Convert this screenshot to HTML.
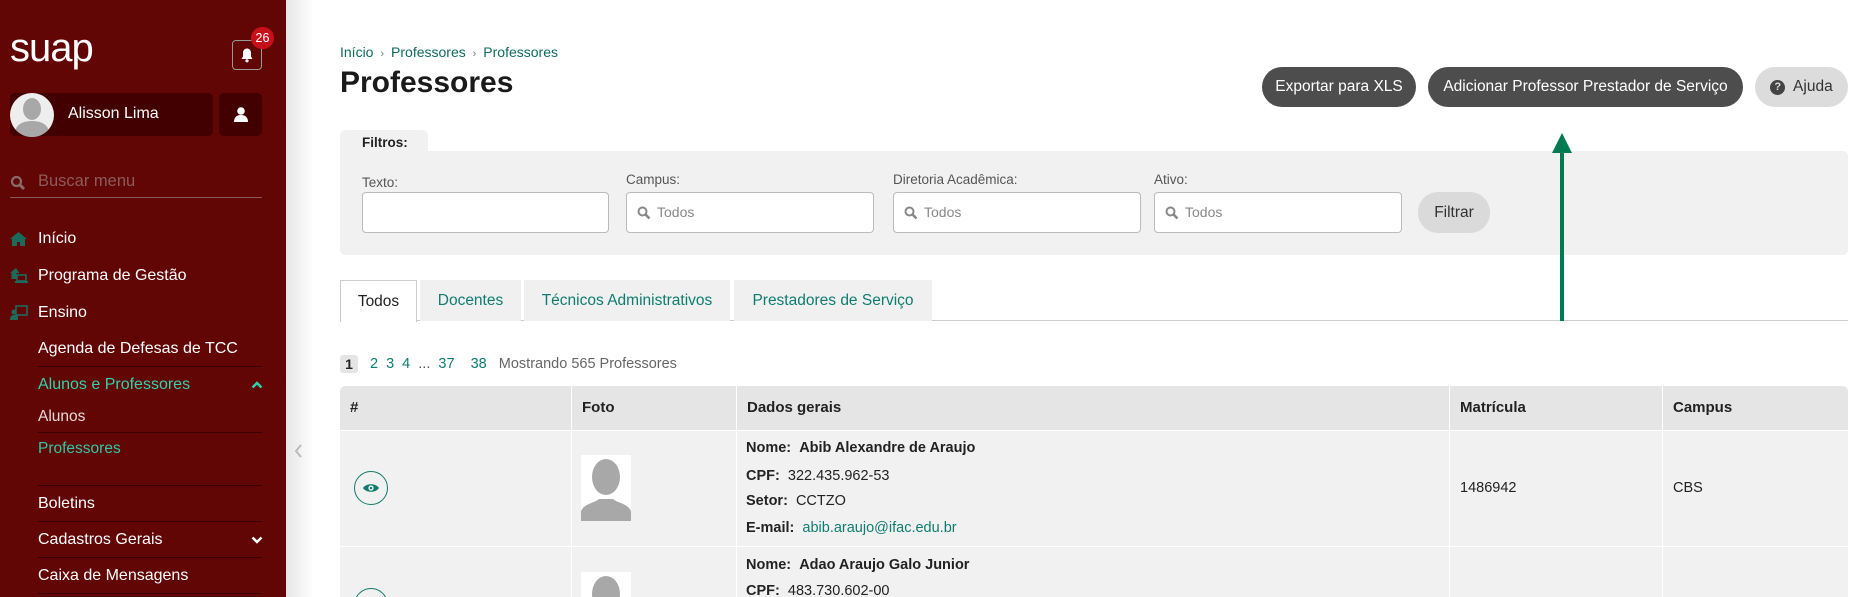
<!DOCTYPE html>
<html><head><meta charset="utf-8"><style>
*{margin:0;padding:0;box-sizing:border-box}
html,body{width:1859px;height:597px;overflow:hidden}
body{background:#fff;font-family:"Liberation Sans",sans-serif;color:#222}
#wrap{position:relative;width:1859px;height:597px;overflow:hidden}
.a{position:absolute}
#sb{left:0;top:0;width:286px;height:597px;background:#610505}
.mi{position:absolute;left:38px;color:#fff;font-size:16px;line-height:20px}
.ln{position:absolute;left:38px;width:224px;height:1px;background:#3a0000}
.teal{color:#0f7c70}
.lbl{position:absolute;font-size:13.5px;color:#555}
.inp{position:absolute;top:192px;height:41px;background:#fff;border:1px solid #bbb;border-radius:4px}
.inp span{position:absolute;left:30px;top:11px;font-size:14px;color:#888}
.btn{position:absolute;top:67px;height:40px;border-radius:20px;background:#4d4d4d;color:#fff;font-size:15.5px;line-height:40px;text-align:center}
.tab{position:absolute;top:280px;height:41px;background:#f0f0f0;font-size:15.5px;line-height:41px;text-align:center;color:#0f7c70}
.th{position:absolute;top:386px;height:44px;background:#e5e5e5;font-weight:bold;font-size:15px;line-height:44px;padding-left:10px}
.td{position:absolute;background:#f1f1f1;font-size:14.5px}
.dl{position:absolute;left:746px;font-size:14.5px;line-height:18px}
</style></head><body><div id="wrap">
<div id="sb" class="a">
  <div class="a" style="left:10px;top:26px;color:#fff;font-size:40px;letter-spacing:-1px">suap</div>
  <div class="a" style="left:232px;top:40px;width:30px;height:30px;border:1.5px solid #999;border-radius:4px"></div>
  <svg class="a" style="left:239px;top:47px" width="16" height="16" viewBox="0 0 16 16"><path d="M8 1.5c-2.5 0-4 2-4 4.5v3.5L2.5 12h11L12 9.5V6c0-2.5-1.5-4.5-4-4.5z" fill="#fff"/><circle cx="8" cy="13.8" r="1.6" fill="#fff"/></svg>
  <div class="a" style="left:251px;top:27px;width:23px;height:22px;border-radius:11px;background:#c8101a;color:#fff;font-size:12.5px;line-height:22px;text-align:center">26</div>
  <div class="a" style="left:10px;top:93px;width:203px;height:43px;background:#420000;border-radius:5px"></div>
  <div class="a" style="left:10px;top:93px;width:44px;height:44px;border-radius:50%;background:#eee;overflow:hidden"><svg width="44" height="44"><ellipse cx="22" cy="16" rx="9" ry="11" fill="#a8a8a8"/><path d="M4 44c0-12 8-16 18-16s18 4 18 16z" fill="#a8a8a8"/></svg></div>
  <div class="a" style="left:68px;top:105px;color:#fff;font-size:16px">Alisson Lima</div>
  <div class="a" style="left:219px;top:93px;width:43px;height:43px;background:#420000;border-radius:5px"></div>
  <svg class="a" style="left:233px;top:106px" width="16" height="16"><circle cx="8" cy="5" r="3.8" fill="#fff"/><path d="M1 16c0-5 3-7 7-7s7 2 7 7z" fill="#fff"/></svg>
  <svg class="a" style="left:10px;top:175px" width="16" height="16"><circle cx="6.5" cy="6.5" r="4.5" stroke="#8a6a6a" stroke-width="2.2" fill="none"/><path d="M10 10l4 4" stroke="#8a6a6a" stroke-width="3"/></svg>
  <div class="a" style="left:38px;top:172px;color:#8d5b5b;font-size:16.5px">Buscar menu</div>
  <div class="a" style="left:10px;top:197px;width:252px;height:1px;background:#8a5a5a"></div>
  <svg class="a" style="left:10px;top:232px" width="17" height="14"><path d="M8.5 0L0 7h2v7h5v-4h3v4h5V7h2z" fill="#1b6b5d"/></svg>
  <div class="mi" style="top:229px">Início</div>
  <svg class="a" style="left:10px;top:268px" width="18" height="16"><path d="M6 0L0 5h1.5v6h5V5h3z" fill="#1b6b5d"/><rect x="7" y="7" width="9" height="6" fill="none" stroke="#1b6b5d" stroke-width="1.6"/><rect x="5" y="13" width="13" height="2" fill="#1b6b5d"/></svg>
  <div class="mi" style="top:266px">Programa de Gestão</div>
  <svg class="a" style="left:10px;top:305px" width="18" height="16"><rect x="6" y="1" width="11" height="9" fill="none" stroke="#1b6b5d" stroke-width="1.6"/><circle cx="4" cy="7" r="2.5" fill="#1b6b5d"/><path d="M0 15c0-4 2-5 4-5h4v5z" fill="#1b6b5d"/></svg>
  <div class="mi" style="top:303px">Ensino</div>
  <div class="mi" style="top:339px">Agenda de Defesas de TCC</div>
  <div class="ln" style="top:366px"></div>
  <div class="mi" style="top:375px;color:#2fd3ad">Alunos e Professores</div>
  <svg class="a" style="left:251px;top:380px" width="12" height="9"><path d="M1.5 7.5L6 3l4.5 4.5" stroke="#2fd3ad" stroke-width="2.4" fill="none"/></svg>
  <div class="mi" style="top:407px;color:#e6d8d8;font-size:15.5px">Alunos</div>
  <div class="ln" style="top:432px"></div>
  <div class="mi" style="top:439px;color:#2fc8a5;font-size:15.5px">Professores</div>
  <div class="ln" style="top:485px"></div>
  <div class="mi" style="top:494px">Boletins</div>
  <div class="ln" style="top:521px"></div>
  <div class="mi" style="top:530px">Cadastros Gerais</div>
  <svg class="a" style="left:251px;top:536px" width="12" height="9"><path d="M1.5 1.5L6 6l4.5-4.5" stroke="#fff" stroke-width="2.4" fill="none"/></svg>
  <div class="ln" style="top:557px"></div>
  <div class="mi" style="top:566px">Caixa de Mensagens</div>
  <div class="ln" style="top:593px"></div>
</div>
<div class="a" style="left:286px;top:0;width:28px;height:597px;background:linear-gradient(to right,#e6e6e6,#fff)"></div>
<svg class="a" style="left:293px;top:443px" width="10" height="16"><path d="M8 2L3 8l5 6" stroke="#bbb" stroke-width="2" fill="none"/></svg>

<div class="a" style="left:340px;top:44px;font-size:14px;color:#0f6a60">Início <span style="color:#777;font-size:11px">&nbsp;›&nbsp;</span> Professores <span style="color:#777;font-size:11px">&nbsp;›&nbsp;</span> Professores</div>
<div class="a" style="left:340px;top:66px;font-size:30px;font-weight:bold;color:#1a1a1a">Professores</div>

<div class="btn" style="left:1262px;width:154px">Exportar para XLS</div>
<div class="btn" style="left:1428px;width:315px">Adicionar Professor Prestador de Serviço</div>
<div class="btn" style="left:1755px;width:93px;background:#dcdcdc;color:#333"><span style="display:inline-block;width:15px;height:15px;border-radius:50%;background:#444;color:#ddd;font-size:11px;line-height:15px;font-weight:bold;vertical-align:1px">?</span>&nbsp; Ajuda</div>

<div class="a" style="left:340px;top:130px;width:88px;height:24px;background:#f1f1f1;border-radius:6px 6px 0 0;font-size:13.5px;font-weight:bold;line-height:26px;padding-left:22px">Filtros:</div>
<div class="a" style="left:340px;top:151px;width:1508px;height:104px;background:#f1f1f1;border-radius:0 5px 5px 5px"></div>
<div class="lbl" style="left:362px;top:175px">Texto:</div>
<div class="lbl" style="left:626px;top:172px">Campus:</div>
<div class="lbl" style="left:893px;top:172px">Diretoria Acadêmica:</div>
<div class="lbl" style="left:1154px;top:172px">Ativo:</div>
<div class="inp" style="left:362px;width:247px"></div>
<div class="inp" style="left:626px;width:248px"><svg class="a" style="left:10px;top:13px" width="14" height="14"><circle cx="5.5" cy="5.5" r="4" stroke="#888" stroke-width="2" fill="none"/><path d="M8.5 8.5l4 4" stroke="#888" stroke-width="2.6"/></svg><span>Todos</span></div>
<div class="inp" style="left:893px;width:248px"><svg class="a" style="left:10px;top:13px" width="14" height="14"><circle cx="5.5" cy="5.5" r="4" stroke="#888" stroke-width="2" fill="none"/><path d="M8.5 8.5l4 4" stroke="#888" stroke-width="2.6"/></svg><span>Todos</span></div>
<div class="inp" style="left:1154px;width:248px"><svg class="a" style="left:10px;top:13px" width="14" height="14"><circle cx="5.5" cy="5.5" r="4" stroke="#888" stroke-width="2" fill="none"/><path d="M8.5 8.5l4 4" stroke="#888" stroke-width="2.6"/></svg><span>Todos</span></div>
<div class="a" style="left:1418px;top:192px;width:72px;height:41px;border-radius:20px;background:#dadada;font-size:15.5px;line-height:41px;text-align:center;color:#333">Filtrar</div>

<div class="a" style="left:340px;top:320px;width:1508px;height:1px;background:#ccc"></div>
<div class="tab" style="left:340px;width:77px;background:#fff;color:#222;border:1px solid #ccc;border-bottom:none;height:42px">Todos</div>
<div class="tab" style="left:420px;width:101px">Docentes</div>
<div class="tab" style="left:524px;width:206px">Técnicos Administrativos</div>
<div class="tab" style="left:734px;width:198px">Prestadores de Serviço</div>

<div class="a" style="left:1560px;top:148px;width:4px;height:173px;background:#007a50"></div>
<div class="a" style="left:1552px;top:133px;width:0;height:0;border-left:10px solid transparent;border-right:10px solid transparent;border-bottom:20px solid #007a50"></div>

<div class="a" style="left:340px;top:355px;width:18px;height:18px;background:#e5e5e5;border-radius:3px;font-size:14px;font-weight:bold;line-height:18px;text-align:center">1</div>
<div class="a" style="left:370px;top:356px;font-size:14.5px;color:#0f7c70;word-spacing:4px">2 3 4 <span style="color:#555">...</span> 37&nbsp; 38 <span style="color:#666;word-spacing:0">&nbsp;Mostrando 565 Professores</span></div>

<div class="th" style="left:340px;width:231px;border-radius:5px 0 0 0">#</div>
<div class="th" style="left:572px;width:164px">Foto</div>
<div class="th" style="left:737px;width:712px">Dados gerais</div>
<div class="th" style="left:1450px;width:212px">Matrícula</div>
<div class="th" style="left:1663px;width:185px;border-radius:0 5px 0 0">Campus</div>

<div class="td" style="left:340px;top:431px;width:231px;height:115px"></div>
<div class="td" style="left:572px;top:431px;width:164px;height:115px"></div>
<div class="td" style="left:737px;top:431px;width:712px;height:115px"></div>
<div class="td" style="left:1450px;top:431px;width:212px;height:115px"><div style="position:absolute;left:10px;top:49px">1486942</div></div>
<div class="td" style="left:1663px;top:431px;width:185px;height:115px"><div style="position:absolute;left:10px;top:49px">CBS</div></div>
<div class="td" style="left:340px;top:547px;width:231px;height:50px"></div>
<div class="td" style="left:572px;top:547px;width:164px;height:50px"></div>
<div class="td" style="left:737px;top:547px;width:712px;height:50px"></div>
<div class="td" style="left:1450px;top:547px;width:212px;height:50px"></div>
<div class="td" style="left:1663px;top:547px;width:185px;height:50px"></div>

<div class="a" style="left:354px;top:471px;width:34px;height:34px;border:1.5px solid #137a6b;border-radius:50%"></div>
<svg class="a" style="left:362px;top:482px" width="18" height="12"><path d="M1 6C4 1 14 1 17 6C14 11 4 11 1 6z" fill="#137a6b"/><circle cx="9" cy="6" r="2.6" fill="#fff"/><circle cx="9" cy="6" r="1.3" fill="#137a6b"/></svg>
<div class="a" style="left:354px;top:588px;width:34px;height:9px;overflow:hidden"><div style="width:34px;height:34px;border:1.5px solid #137a6b;border-radius:50%"></div></div>

<svg class="a" style="left:581px;top:455px" width="50" height="66"><rect width="50" height="66" fill="#fff"/><ellipse cx="25" cy="22" rx="14" ry="18" fill="#a8a8a8"/><path d="M0 66V56c4-8 14-8 18-12h14c4 4 14 4 18 12v10z" fill="#a8a8a8"/></svg>
<svg class="a" style="left:581px;top:572px" width="50" height="25"><rect width="50" height="25" fill="#fff"/><ellipse cx="25" cy="22" rx="14" ry="18" fill="#a8a8a8"/></svg>

<div class="dl" style="top:439px"><b>Nome:</b>&nbsp; <b>Abib Alexandre de Araujo</b></div>
<div class="dl" style="top:467px"><b>CPF:</b>&nbsp; 322.435.962-53</div>
<div class="dl" style="top:492px"><b>Setor:</b>&nbsp; CCTZO</div>
<div class="dl" style="top:519px"><b>E-mail:</b>&nbsp; <span class="teal">abib.araujo@ifac.edu.br</span></div>
<div class="dl" style="top:556px"><b>Nome:</b>&nbsp; <b>Adao Araujo Galo Junior</b></div>
<div class="dl" style="top:582px"><b>CPF:</b>&nbsp; 483.730.602-00</div>
</div></body></html>
